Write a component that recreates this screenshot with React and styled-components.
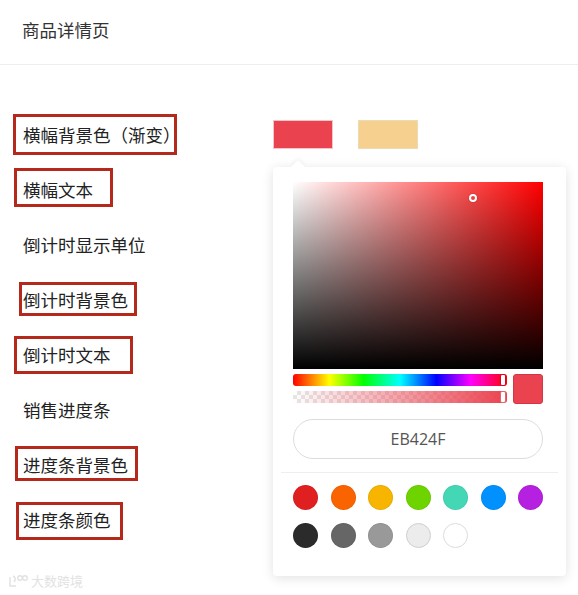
import React from "react";
import styled, { createGlobalStyle } from "styled-components";

const GlobalStyle = createGlobalStyle`
  body {
    margin: 0;
    background: #fff;
    font-family: "Noto Sans CJK SC", "Liberation Sans", sans-serif;
    color: #333;
  }
`;

const Page = styled.div`
  width: 578px;
  height: 595px;
  position: relative;
  overflow: hidden;
`;

const Header = styled.div`
  height: 65px;
  display: flex;
  align-items: center;
  padding-left: 22px;
  padding-bottom: 6px;
  box-sizing: border-box;
  border-bottom: 1px solid #eee;
  font-size: 17.5px;
  color: #333;
`;

const Content = styled.div`
  position: relative;
  padding-top: 42px;
`;

const Row = styled.div`
  height: 55px;
  display: grid;
  grid-template-columns: 273px 1fr;
  align-items: center;
`;

const Label = styled.span`
  position: relative;
  justify-self: start;
  margin-left: 23px;
  font-size: 17.5px;
  line-height: 22px;
  color: #222;
`;

const Annot = styled.span`
  position: absolute;
  top: ${(p) => p.$t}px;
  bottom: ${(p) => p.$b}px;
  left: ${(p) => p.$l}px;
  width: ${(p) => p.$w}px;
  border: 3px solid #b5291c;
  box-sizing: border-box;
  pointer-events: none;
`;

const Swatches = styled.div`
  display: flex;
  gap: 25px;
`;

const Swatch = styled.div`
  width: 60px;
  height: 29px;
  background: ${(p) => p.$c};
  border: 1px solid ${(p) => p.$b};
  box-sizing: border-box;
`;

const Popover = styled.div`
  position: absolute;
  left: 273px;
  top: 102px;
  width: 293px;
  height: 409px;
  box-sizing: border-box;
  padding: 15px 23px 0 20px;
  background: #fff;
  border-radius: 4px;
  box-shadow: 0 2px 12px rgba(0, 0, 0, 0.12);

  &::before {
    content: "";
    position: absolute;
    top: -5px;
    left: 20px;
    width: 10px;
    height: 10px;
    background: #fff;
    transform: rotate(45deg);
    box-shadow: -2px -2px 4px rgba(0, 0, 0, 0.04);
  }
`;

const Saturation = styled.div`
  position: relative;
  width: 250px;
  height: 187px;
  background: linear-gradient(to top, #000, rgba(0, 0, 0, 0)),
    linear-gradient(to right, #fff, #ff0000);
`;

const Pointer = styled.div`
  position: absolute;
  left: 176px;
  top: 12px;
  width: 8px;
  height: 8px;
  border-radius: 50%;
  border: 2px solid #fff;
  box-sizing: border-box;
  box-shadow: 0 0 1px rgba(0, 0, 0, 0.6);
`;

const Sliders = styled.div`
  display: flex;
  gap: 6px;
  margin-top: 5px;
  width: 250px;
`;

const Bars = styled.div`
  flex: 1;
  display: flex;
  flex-direction: column;
  gap: 5px;
`;

const Bar = styled.div`
  position: relative;
  height: 12px;
  border-radius: 3px;
  background: ${(p) => p.$bg};
`;

const Thumb = styled.div`
  position: absolute;
  right: 1px;
  top: 0;
  width: 6px;
  height: 12px;
  border-radius: 2px;
  background: #fff;
  border: 1px solid ${(p) => p.$c};
  box-sizing: border-box;
`;

const Preview = styled.div`
  width: 30px;
  height: 30px;
  border-radius: 3px;
  background: #eb424f;
  border: 1px solid #d03844;
  box-sizing: border-box;
`;

const HexInput = styled.div`
  width: 250px;
  height: 40px;
  margin-top: 15px;
  box-sizing: border-box;
  border: 1px solid #ddd;
  border-radius: 20px;
  display: flex;
  align-items: center;
  justify-content: center;
  font-family: "Open Sans", "Liberation Sans", sans-serif;
  font-size: 16px;
  color: #555;
`;

const Divider = styled.div`
  height: 1px;
  background: #eee;
  margin: 13px -15px 0 -12px;
`;

const Presets = styled.div`
  display: grid;
  grid-template-columns: repeat(7, 25px);
  column-gap: 12.5px;
  row-gap: 13px;
  margin-top: 12px;
`;

const Dot = styled.div`
  width: 25px;
  height: 25px;
  border-radius: 50%;
  box-sizing: border-box;
  background: ${(p) => p.$c};
  border: 1px solid ${(p) => p.$b || "rgba(0,0,0,0.06)"};
`;

const Watermark = styled.div`
  position: absolute;
  left: 8px;
  bottom: 5px;
  display: flex;
  align-items: center;
  gap: 3px;
  font-size: 13px;
  color: #e2e2e2;
`;

const rows = [
  { text: "横幅背景色（渐变）", box: [-10, -9, -10, 164], swatches: true },
  { text: "横幅文本", box: [-11, -6, -9, 99] },
  { text: "倒计时显示单位" },
  { text: "倒计时背景色", box: [-7, -5, -4, 118] },
  { text: "倒计时文本", box: [-8, -8, -9, 119] },
  { text: "销售进度条" },
  { text: "进度条背景色", box: [-8, -5, -8, 123] },
  { text: "进度条颜色", box: [-7, -9, -7, 107] },
];

const presets = [
  { c: "#e02020" },
  { c: "#fa6400" },
  { c: "#f7b500" },
  { c: "#6dd400" },
  { c: "#44d7b6" },
  { c: "#0091ff" },
  { c: "#b620e0" },
  { c: "#2b2b2b" },
  { c: "#666666" },
  { c: "#999999" },
  { c: "#ececec", b: "#cfcfcf" },
  { c: "#ffffff", b: "#dcdcdc" },
];

const hue =
  "linear-gradient(to right, #f00 0%, #ff0 17%, #0f0 33%, #0ff 50%, #00f 67%, #f0f 83%, #f00 100%)";
const alpha =
  "linear-gradient(to right, rgba(235,66,79,0), #eb424f), repeating-conic-gradient(#e6e6e6 0% 25%, #fff 0% 50%) 0 0 / 8px 8px";

export default function App() {
  return (
    <Page>
      <GlobalStyle />
      <Header>商品详情页</Header>
      <Content>
        {rows.map((r) => (
          <Row key={r.text}>
            <Label>
              {r.text}
              {r.box && (
                <Annot $t={r.box[0]} $b={r.box[1]} $l={r.box[2]} $w={r.box[3]} />
              )}
            </Label>
            {r.swatches && (
              <Swatches>
                <Swatch $c="#eb424f" $b="#f3c4c8" />
                <Swatch $c="#f6d08f" $b="#ecd9b5" />
              </Swatches>
            )}
          </Row>
        ))}
        <Popover>
          <Saturation>
            <Pointer />
          </Saturation>
          <Sliders>
            <Bars>
              <Bar $bg={hue}>
                <Thumb $c="#e0001e" />
              </Bar>
              <Bar $bg={alpha}>
                <Thumb $c="#e06670" />
              </Bar>
            </Bars>
            <Preview />
          </Sliders>
          <HexInput>EB424F</HexInput>
          <Divider />
          <Presets>
            {presets.map((p) => (
              <Dot key={p.c} $c={p.c} $b={p.b} />
            ))}
          </Presets>
        </Popover>
      </Content>
      <Watermark>
        <svg width="20" height="14" viewBox="0 0 20 14" fill="none" stroke="#e2e2e2" strokeWidth="1.4">
          <path d="M2 3 L2 12 L8 12" />
          <path d="M5 2 Q9 4 6 8" />
          <circle cx="12" cy="4" r="2.3" />
          <circle cx="17" cy="4" r="2.3" />
        </svg>
        <span>大数跨境</span>
      </Watermark>
    </Page>
  );
}
